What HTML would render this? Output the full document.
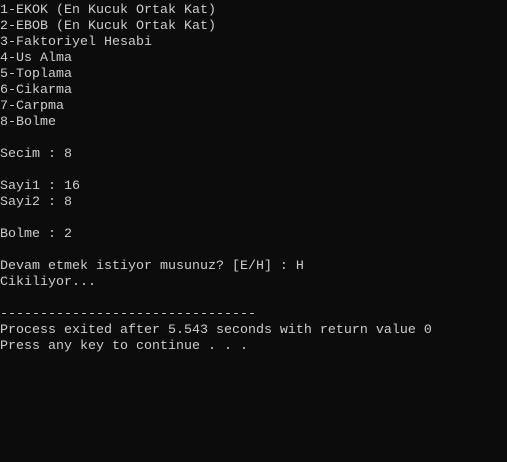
<!DOCTYPE html>
<html><head><meta charset="utf-8"><style>
html,body{margin:0;padding:0;background:#0c0c0c;width:507px;height:462px;overflow:hidden}
pre{margin:0;padding:3px 0 0 0;font-family:"Liberation Mono",monospace;font-size:13.33px;line-height:16px;color:#cccccc}
</style></head><body><pre>1-EKOK (En Kucuk Ortak Kat)
2-EBOB (En Kucuk Ortak Kat)
3-Faktoriyel Hesabi
4-Us Alma
5-Toplama
6-Cikarma
7-Carpma
8-Bolme

Secim : 8

Sayi1 : 16
Sayi2 : 8

Bolme : 2

Devam etmek istiyor musunuz? [E/H] : H
Cikiliyor...

--------------------------------
Process exited after 5.543 seconds with return value 0
Press any key to continue . . .
</pre></body></html>
